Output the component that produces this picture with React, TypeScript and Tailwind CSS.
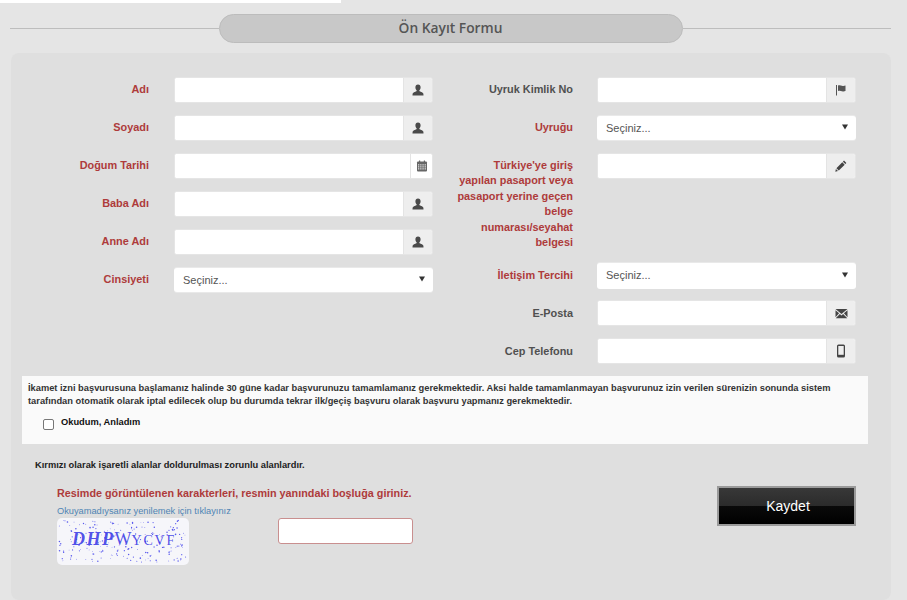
import React from "react";

const SANS = "font-['Liberation_Sans',Arial,sans-serif]";

const User = () => (
  <svg width="12" height="12" viewBox="0 0 12 12" fill="#4a4a4a">
    <path d="M6 0.4C4.3 0.4 3.4 1.6 3.4 3.2c0 1.2.5 2.3 1.2 3 .2.3.1.9-.2 1.1C3 8 .8 8.500.6 9.800L.5 11.500h11l-.1-1.700C11.200 8.500 9 8 7.600 7.300c-.3-.2-.4-.8-.2-1.100.7-.7 1.200-1.800 1.200-3C8.600 1.600 7.700.4 6 .4z" />
  </svg>
);
const Flag = () => (
  <svg width="12" height="12" viewBox="0 0 12 12" fill="#555">
    <rect x="1" y="1" width="1" height="10.500" />
    <path d="M3 1.500c1.500-.6 2.500-.3 4 .2 1 .3 2 .3 3.500-.2v5.500c-1.500.6-2.500.5-3.500.2-1.500-.5-2.500-.8-4-.2z" />
  </svg>
);
const Calendar = () => (
  <svg width="12" height="12" viewBox="0 0 12 12">
    <rect x="1" y="1.500" width="10" height="10" rx="1" fill="#666" />
    <rect x="3" y="0.500" width="1.200" height="2" fill="#666" />
    <rect x="7.800" y="0.500" width="1.200" height="2" fill="#666" />
    <g fill="#ddd">
      {[2, 4.200, 6.400, 8.600].flatMap((x) =>
        [4.200, 6.200, 8.200].map((y) => <rect key={`${x}-${y}`} x={x} y={y} width="1.300" height="1.300" />)
      )}
    </g>
  </svg>
);
const Pencil = () => (
  <svg width="12" height="12" viewBox="0 0 12 12" fill="#444">
    <path d="M9 .6l2.400 2.400-1.100 1.100-2.400-2.400zM7.300 2.300l2.400 2.400-5.900 5.900-2.400-2.400zM.9 9l2.100 2.100-2.700.6z" />
  </svg>
);
const Mail = () => (
  <svg width="13" height="11" viewBox="0 0 13 11" fill="#444">
    <path d="M.5 1h12L6.500 6zM.5 2.300v6.900l3.600-3.900zM12.500 2.300v6.900L8.900 5.300zM4.900 6l1.600 1.400L8.100 6l4.200 4.200H.7z" />
  </svg>
);
const Phone = () => (
  <svg width="10" height="14" viewBox="0 0 10 14">
    <rect x="1" y="0.500" width="8" height="13" rx="1.500" fill="#444" />
    <rect x="2.300" y="2" width="5.400" height="8.800" fill="#eee" />
  </svg>
);

function Label({ text, red, low }: { text: string; red?: boolean; low?: boolean }) {
  return (
    <div
      className={`w-[120px] shrink-0 text-right text-[10.900px] leading-[15.400px] font-bold ${low ? "pt-[6px]" : "pt-[5px]"} ${
        red ? "text-[#ae3b3b]" : "text-[#505050]"
      }`}
    >
      {text}
    </div>
  );
}

function Field({ icon, white }: { icon: React.ReactNode; white?: boolean }) {
  return (
    <div className="flex h-[26px] w-[259px] overflow-hidden rounded-[3px] border border-[#e5e5e5] bg-white">
      <input type="text" className="min-w-0 flex-1 bg-white outline-none" />
      <div
        className={`flex shrink-0 items-center justify-center border-l border-[#e4e4e4] ${
          white ? "w-[22px] bg-white" : "w-[29px] bg-[#eeeeee]"
        }`}
      >
        {icon}
      </div>
    </div>
  );
}

function Select({ strip }: { strip?: boolean }) {
  return (
    <div className="relative h-[26px] w-[259px] rounded-[3px] bg-[#e9e9e9]">
      <select
        className={`w-full appearance-none rounded-[3px] bg-white pl-[9px] text-[11px] text-[#555] outline-none ${
          strip ? "h-[24px]" : "h-[26px]"
        }`}
      >
        <option>Seçiniz...</option>
      </select>
      <svg
        className={`pointer-events-none absolute right-[8px] ${strip ? "top-[9px]" : "top-[10px]"}`}
        width="6"
        height="6"
        viewBox="0 0 6 6"
        fill="#333"
      >
        <path d="M0 .5h6L3 5.500z" />
      </svg>
    </div>
  );
}

function Row({ label, red, low, gap, children }: { label: string; red?: boolean; low?: boolean; gap: string; children: React.ReactNode }) {
  return (
    <div className={`flex items-start ${gap}`}>
      <Label text={label} red={red} low={low} />
      {children}
    </div>
  );
}

function Captcha() {
  let s = 12345;
  const rnd = () => {
    s = (s * 16807) % 2147483647;
    return s / 2147483647;
  };
  const dots = Array.from({ length: 210 }, () => ({
    x: 2 + rnd() * 128,
    y: 2 + rnd() * 43,
    r: 0.35 + rnd() * 0.45,
  }));
  return (
    <svg width="132" height="47" viewBox="0 0 132 47" className="block rounded-[5px] bg-[#f6f6fa]">
      {dots.map((d, i) => (
        <circle key={i} cx={d.x} cy={d.y} r={d.r} fill="#5a5aee" />
      ))}
      <text y="27" fill="#3b3be6" fillOpacity="0.9" fontFamily="Liberation Serif, serif" fontWeight="700" fontStyle="italic">
        <tspan x="15" fontSize="18" letterSpacing="1.500">DHP</tspan>
        <tspan fontSize="18" fontStyle="normal" fontWeight="400">W</tspan>
        <tspan fontSize="14" fontStyle="normal" fontWeight="400" letterSpacing="1.800">YCVF</tspan>
      </text>
    </svg>
  );
}

export default function App() {
  const l = "gap-[25px]";
  const r = "gap-[24px]";
  return (
    <div className={`${SANS} h-[600px] overflow-hidden bg-[#e5e5e5]`}>
      <div className="h-[3px] w-[341px] bg-white" />

      <div className="mt-[11px] flex items-center pr-[16px] pl-[10px]">
        <div className="h-px flex-1 bg-[#bdbdbd]" />
        <div className="flex h-[29px] w-[464px] items-center justify-center rounded-[15px] border border-[#bcbcbc] bg-[#c8c8c8] font-['Open_Sans',sans-serif] text-[13.800px] font-semibold text-[#555]">
          Ön Kayıt Formu
        </div>
        <div className="h-px flex-1 bg-[#bdbdbd]" />
      </div>

      <div className="mt-[10px] ml-[11px] h-[547px] w-[880px] rounded-[8px] bg-[#dfdfdf] pt-[24px]">
        <div className="flex gap-[20px] pl-[18px]">
          <div className="flex flex-col gap-[12px]">
            <Row gap={l} label="Adı" red><Field icon={<User />} /></Row>
            <Row gap={l} label="Soyadı" red><Field icon={<User />} /></Row>
            <Row gap={l} label="Doğum Tarihi" red><Field icon={<Calendar />} white /></Row>
            <Row gap={l} label="Baba Adı" red><Field icon={<User />} /></Row>
            <Row gap={l} label="Anne Adı" red><Field icon={<User />} /></Row>
            <Row gap={l} label="Cinsiyeti" red><Select strip /></Row>
          </div>
          <div className="flex flex-col gap-[12px]">
            <Row gap={r} label="Uyruk Kimlik No"><Field icon={<Flag />} /></Row>
            <Row gap={r} label="Uyruğu" red><Select strip /></Row>
            <Row gap={r} label="Türkiye'ye giriş yapılan pasaport veya pasaport yerine geçen belge numarası/seyahat belgesi" red>
              <Field icon={<Pencil />} />
            </Row>
            <Row gap={r} label="İletişim Tercihi" red low><Select /></Row>
            <Row gap={r} label="E-Posta" low><Field icon={<Mail />} /></Row>
            <Row gap={r} label="Cep Telefonu" low><Field icon={<Phone />} /></Row>
          </div>
        </div>

        <div className="mt-[12px] ml-[11px] h-[68px] w-[846px] bg-[#fafafa] px-[6px] pt-[6px]">
          <p className="text-[9.300px] leading-[13px] font-bold text-[#333]">
            İkamet izni başvurusuna başlamanız halinde 30 güne kadar başvurunuzu tamamlamanız gerekmektedir. Aksi halde tamamlanmayan başvurunuz izin verilen sürenizin sonunda sistem tarafından otomatik olarak iptal edilecek olup bu durumda tekrar ilk/geçiş başvuru olarak başvuru yapmanız gerekmektedir.
          </p>
          <label className="mt-[8px] ml-[15px] flex items-start gap-[7px]">
            <input type="checkbox" className="mt-[3px] h-[11px] w-[11px] appearance-none rounded-[2px] border border-[#777] bg-white" />
            <span className="text-[9.300px] leading-[13px] font-bold text-[#111]">Okudum, Anladım</span>
          </label>
        </div>

        <p className="mt-[15px] ml-[24px] text-[9.300px] leading-[13px] font-bold text-[#222]">
          Kırmızı olarak işaretli alanlar doldurulması zorunlu alanlardır.
        </p>

        <div className="mt-[14px] ml-[46px] flex w-[799px] items-start justify-between">
          <div>
            <p className="text-[10.800px] leading-[14px] font-bold text-[#ae3b3b]">
              Resimde görüntülenen karakterleri, resmin yanındaki boşluğa giriniz.
            </p>
            <a className="mt-[5px] block text-[9.250px] leading-[12px] text-[#4f85b5]">Okuyamadıysanız yenilemek için tıklayınız</a>
            <div className="mt-[1px] flex items-start gap-[89px]">
              <Captcha />
              <input type="text" className="h-[26px] w-[135px] rounded-[3px] border border-[#c98f8f] bg-white outline-none" />
            </div>
          </div>
          <button className="h-[40px] w-[139px] border-2 border-[#9a9a9a] bg-[linear-gradient(#383838_0%,#2b2b2b_50%,#0a0a0a_50%,#000_100%)] pl-[3px] text-[14px] text-white">
            Kaydet
          </button>
        </div>
      </div>
    </div>
  );
}
